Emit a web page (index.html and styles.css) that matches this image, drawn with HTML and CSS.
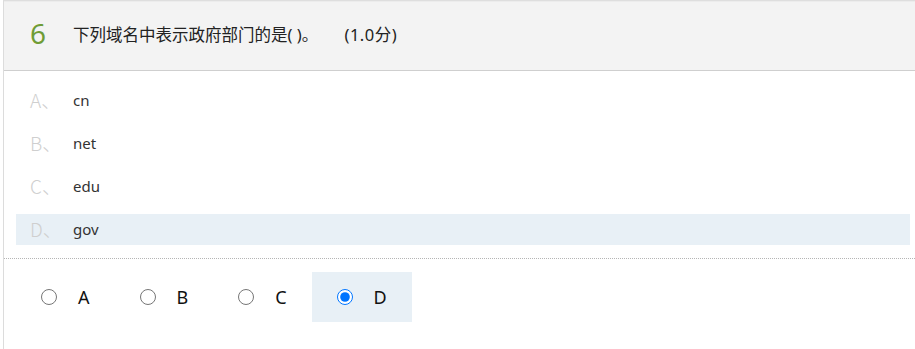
FILE: index.html
```html
<!DOCTYPE html>
<html lang="zh-CN">
<head>
  <meta charset="UTF-8" />
  <meta name="viewport" content="width=device-width, initial-scale=1.0" />
  <title>单选题</title>
  <link rel="stylesheet" href="styles.css">
</head>
<body>
  <div class="question">
    <div class="q-head">
      <span class="q-num">6</span>
      <span class="q-title">下列域名中表示政府部门的是( )。 <span class="q-score">(1.0分)</span></span>
    </div>

    <ul class="q-options">
      <li class="opt"><span class="opt-key">A、</span><span class="opt-val">cn</span></li>
      <li class="opt"><span class="opt-key">B、</span><span class="opt-val">net</span></li>
      <li class="opt"><span class="opt-key">C、</span><span class="opt-val">edu</span></li>
      <li class="opt opt-on"><span class="opt-key">D、</span><span class="opt-val">gov</span></li>
    </ul>

    <div class="q-answer">
      <label class="ans"><input type="radio" name="q6" value="A"><span>A</span></label>
      <label class="ans"><input type="radio" name="q6" value="B"><span>B</span></label>
      <label class="ans"><input type="radio" name="q6" value="C"><span>C</span></label>
      <label class="ans ans-on"><input type="radio" name="q6" value="D" checked><span>D</span></label>
    </div>
  </div>
</body>
</html>
```

FILE: styles.css
```css
body {
  margin: 0;
  font-family: "Noto Sans", "Noto Sans CJK SC", sans-serif;
  background: #fff;
  color: #333;
}
.question {
  margin-left: 3px;
  border-left: 1px solid #dcdcdc;
  border-top: 1px solid #dedede;
  min-height: 348px;
}
.q-head {
  display: flex;
  align-items: center;
  height: 69px;
  padding-left: 26px;
  background: #f3f3f3;
  border-bottom: 1px solid #cfcfcf;
  box-shadow: inset 0 1px 0 #ececec;
}
.q-num {
  width: 43px;
  font-size: 28px;
  line-height: 1;
  color: #6f9c36;
  margin-top: -5px;
}
.q-title {
  font-family: "Noto Sans", "Noto Sans CJK SC", sans-serif;
  font-size: 16.5px;
  color: #222;
  margin-top: -4px;
}
.q-score {
  margin-left: 22px;
  letter-spacing: 0.5px;
}
.q-options {
  list-style: none;
  margin: 0;
  padding: 14px 5px 13px 12px;
  display: flex;
  flex-direction: column;
  gap: 12px;
}
.opt {
  display: flex;
  align-items: center;
  height: 31px;
  padding: 0 0 2px 14px;
  box-sizing: border-box;
}
.opt-on {
  background: #e8f0f6;
}
.opt-key {
  width: 43px;
  font-family: "Noto Sans CJK SC", sans-serif;
  font-size: 19px;
  font-weight: 300;
  color: #cfcfcf;
}
.opt-val {
  font-size: 15px;
  color: #333;
}
.q-answer {
  display: flex;
  border-top: 1px dotted #b5b5b5;
  padding: 13px 0 0 12px;
}
.ans {
  display: inline-flex;
  align-items: center;
  height: 50px;
  padding: 0 25px;
  font-size: 18px;
  color: #111;
  cursor: pointer;
}
.ans input {
  width: 16px;
  height: 16px;
  margin: 0 21px 0 0;
}
.ans-on {
  background: #e8f0f6;
}
```
